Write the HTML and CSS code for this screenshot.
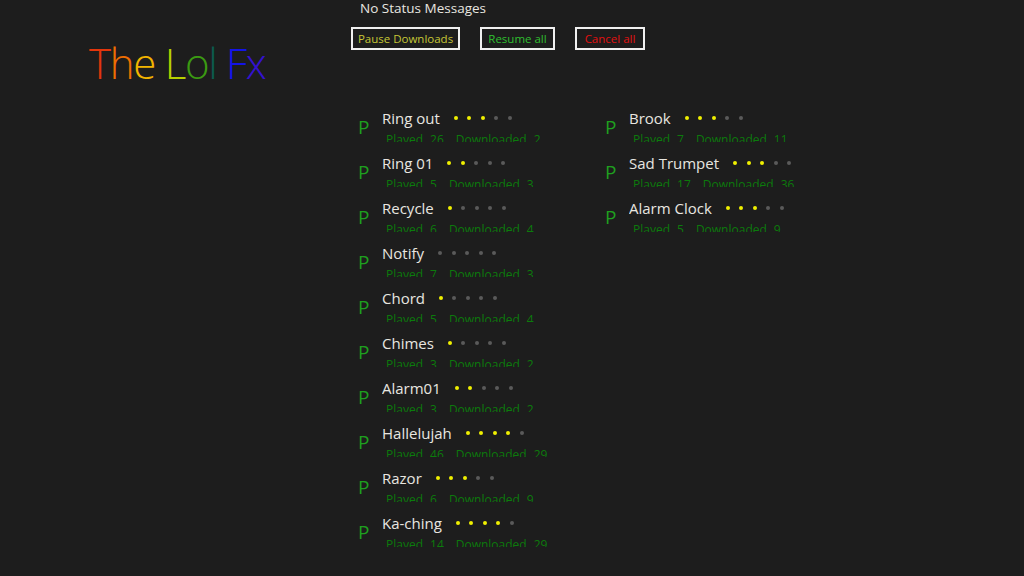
FILE: index.html
```html
<!DOCTYPE html>
<html lang="en">
  <head>
    <meta charset="UTF-8" />
    <title>The Lol Fx</title>
    <link rel="stylesheet" href="styles.css">
  </head>
  <body>
    <div class="page">
      <div class="side">
        <h1 class="logo">
          <span class="c1">T</span><span class="c2">h</span><span class="c3">e</span>
          <span class="c4">L</span><span class="c5">o</span><span class="c6">l</span>
          <span class="c7">F</span><span class="c8">x</span>
        </h1>
      </div>

      <div class="main">
        <div class="status">No Status Messages</div>
        <div class="actions">
          <button class="btn pause">Pause Downloads</button>
          <button class="btn resume">Resume all</button>
          <button class="btn cancel">Cancel all</button>
        </div>

        <ul class="sounds">
          <li class="sound">
            <span class="icon">P</span>
            <div class="info">
              <div class="title">Ring out <span class="rating"><i class="on"></i><i class="on"></i><i class="on"></i><i></i><i></i></span></div>
              <div class="meta"><span>Played</span><span class="num">26</span><span>Downloaded</span><span>2</span></div>
            </div>
          </li>
          <li class="sound">
            <span class="icon">P</span>
            <div class="info">
              <div class="title">Ring 01 <span class="rating"><i class="on"></i><i class="on"></i><i></i><i></i><i></i></span></div>
              <div class="meta"><span>Played</span><span class="num">5</span><span>Downloaded</span><span>3</span></div>
            </div>
          </li>
          <li class="sound">
            <span class="icon">P</span>
            <div class="info">
              <div class="title">Recycle <span class="rating"><i class="on"></i><i></i><i></i><i></i><i></i></span></div>
              <div class="meta"><span>Played</span><span class="num">6</span><span>Downloaded</span><span>4</span></div>
            </div>
          </li>
          <li class="sound">
            <span class="icon">P</span>
            <div class="info">
              <div class="title">Notify <span class="rating"><i></i><i></i><i></i><i></i><i></i></span></div>
              <div class="meta"><span>Played</span><span class="num">7</span><span>Downloaded</span><span>3</span></div>
            </div>
          </li>
          <li class="sound">
            <span class="icon">P</span>
            <div class="info">
              <div class="title">Chord <span class="rating"><i class="on"></i><i></i><i></i><i></i><i></i></span></div>
              <div class="meta"><span>Played</span><span class="num">5</span><span>Downloaded</span><span>4</span></div>
            </div>
          </li>
          <li class="sound">
            <span class="icon">P</span>
            <div class="info">
              <div class="title">Chimes <span class="rating"><i class="on"></i><i></i><i></i><i></i><i></i></span></div>
              <div class="meta"><span>Played</span><span class="num">3</span><span>Downloaded</span><span>2</span></div>
            </div>
          </li>
          <li class="sound">
            <span class="icon">P</span>
            <div class="info">
              <div class="title">Alarm01 <span class="rating"><i class="on"></i><i class="on"></i><i></i><i></i><i></i></span></div>
              <div class="meta"><span>Played</span><span class="num">3</span><span>Downloaded</span><span>2</span></div>
            </div>
          </li>
          <li class="sound">
            <span class="icon">P</span>
            <div class="info">
              <div class="title">Hallelujah <span class="rating"><i class="on"></i><i class="on"></i><i class="on"></i><i class="on"></i><i></i></span></div>
              <div class="meta"><span>Played</span><span class="num">46</span><span>Downloaded</span><span>29</span></div>
            </div>
          </li>
          <li class="sound">
            <span class="icon">P</span>
            <div class="info">
              <div class="title">Razor <span class="rating"><i class="on"></i><i class="on"></i><i class="on"></i><i></i><i></i></span></div>
              <div class="meta"><span>Played</span><span class="num">6</span><span>Downloaded</span><span>9</span></div>
            </div>
          </li>
          <li class="sound">
            <span class="icon">P</span>
            <div class="info">
              <div class="title">Ka-ching <span class="rating"><i class="on"></i><i class="on"></i><i class="on"></i><i class="on"></i><i></i></span></div>
              <div class="meta"><span>Played</span><span class="num">14</span><span>Downloaded</span><span>29</span></div>
            </div>
          </li>
          <li class="sound">
            <span class="icon">P</span>
            <div class="info">
              <div class="title">Brook <span class="rating"><i class="on"></i><i class="on"></i><i class="on"></i><i></i><i></i></span></div>
              <div class="meta"><span>Played</span><span class="num">7</span><span>Downloaded</span><span>11</span></div>
            </div>
          </li>
          <li class="sound">
            <span class="icon">P</span>
            <div class="info">
              <div class="title">Sad Trumpet <span class="rating"><i class="on"></i><i class="on"></i><i class="on"></i><i></i><i></i></span></div>
              <div class="meta"><span>Played</span><span class="num">17</span><span>Downloaded</span><span>36</span></div>
            </div>
          </li>
          <li class="sound">
            <span class="icon">P</span>
            <div class="info">
              <div class="title">Alarm Clock <span class="rating"><i class="on"></i><i class="on"></i><i class="on"></i><i></i><i></i></span></div>
              <div class="meta"><span>Played</span><span class="num">5</span><span>Downloaded</span><span>9</span></div>
            </div>
          </li>
        </ul>
      </div>
    </div>
  </body>
</html>
```

FILE: styles.css
```css
* {
  margin: 0;
  padding: 0;
}

body {
  background-color: #1d1d1d;
  font-family: "Open Sans", "Noto Sans", sans-serif;
  color: #e8e6e0;
}

.page {
  display: flex;
  height: 576px;
  overflow: hidden;
}

.side {
  width: 351px;
  flex-shrink: 0;
}

.logo {
  margin: 34px 0 0 89px;
  font-size: 42px;
  font-weight: 300;
  letter-spacing: -1.3px;
  white-space: nowrap;
}

.c1 { color: #e3360c; }
.c2 { color: #ee6d02; }
.c3 { color: #f2b400; }
.c4 { color: #b6d000; }
.c5 { color: #3b9a12; }
.c6 { color: #0b5a4e; }
.c7 { color: #1414e6; }
.c8 { color: #3412d0; }

.status {
  margin-left: 9px;
  font-size: 13.5px;
  line-height: 16px;
}

.actions {
  display: flex;
  gap: 20px;
  margin-top: 11px;
}

.btn {
  height: 23px;
  padding: 0;
  border: 2px solid #f0f0f0;
  background: transparent;
  font-family: "Open Sans", "Noto Sans", sans-serif;
  font-size: 11.5px;
  white-space: nowrap;
}

.pause { color: #c6c636; width: 109px; }
.resume { color: #2fbf2f; width: 75px; }
.cancel { color: #e21010; width: 70px; }

.sounds {
  list-style: none;
  display: grid;
  grid-template-rows: repeat(10, 45px);
  grid-auto-flow: column;
  grid-auto-columns: 247px;
  margin-top: 58px;
}

.sound {
  display: flex;
  align-items: flex-start;
  padding-left: 7px;
}

.icon {
  width: 24px;
  color: #1f9f1f;
  font-size: 19px;
  line-height: 20px;
  margin-top: 9px;
}

.info {
  height: 34px;
  overflow: hidden;
}

.title {
  display: flex;
  align-items: center;
  font-size: 15px;
  line-height: 20px;
  white-space: nowrap;
}

.rating {
  display: flex;
  margin-left: 14px;
  margin-top: -1px;
}

.rating i {
  width: 4px;
  height: 4px;
  border-radius: 50%;
  background: #5a5a5a;
  margin-right: 9.5px;
}

.rating i.on {
  background: #f0f000;
}

.meta {
  margin: 4px 0 0 4px;
  color: #0c7a0c;
  font-size: 12px;
  line-height: 16px;
  white-space: nowrap;
}

.meta span {
  margin-right: 7px;
}

.meta .num {
  margin-right: 12px;
}
```
